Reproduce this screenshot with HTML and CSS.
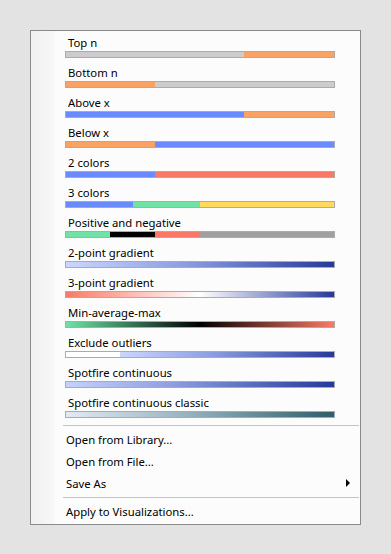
FILE: index.html
```html
<!DOCTYPE html>
<html lang="en">
<head>
    <meta charset="UTF-8">
    <title>Color Scheme Menu</title>
    <link rel="stylesheet" href="styles.css">
</head>
<body>
    <div class="menu">
        <div class="scheme">
            <div class="scheme-label">Top n</div>
            <div class="bar bar-top-n"></div>
        </div>
        <div class="scheme">
            <div class="scheme-label">Bottom n</div>
            <div class="bar bar-bottom-n"></div>
        </div>
        <div class="scheme">
            <div class="scheme-label">Above x</div>
            <div class="bar bar-above-x"></div>
        </div>
        <div class="scheme">
            <div class="scheme-label">Below x</div>
            <div class="bar bar-below-x"></div>
        </div>
        <div class="scheme">
            <div class="scheme-label">2 colors</div>
            <div class="bar bar-two"></div>
        </div>
        <div class="scheme">
            <div class="scheme-label">3 colors</div>
            <div class="bar bar-three"></div>
        </div>
        <div class="scheme">
            <div class="scheme-label">Positive and negative</div>
            <div class="bar bar-posneg"></div>
        </div>
        <div class="scheme">
            <div class="scheme-label">2-point gradient</div>
            <div class="bar bar-grad2"></div>
        </div>
        <div class="scheme">
            <div class="scheme-label">3-point gradient</div>
            <div class="bar bar-grad3"></div>
        </div>
        <div class="scheme">
            <div class="scheme-label">Min-average-max</div>
            <div class="bar bar-minmax"></div>
        </div>
        <div class="scheme">
            <div class="scheme-label">Exclude outliers</div>
            <div class="bar bar-outliers"></div>
        </div>
        <div class="scheme">
            <div class="scheme-label">Spotfire continuous</div>
            <div class="bar bar-spotfire"></div>
        </div>
        <div class="scheme">
            <div class="scheme-label">Spotfire continuous classic</div>
            <div class="bar bar-classic"></div>
        </div>

        <div class="separator"></div>
        <div class="menu-item">Open from Library...</div>
        <div class="menu-item">Open from File...</div>
        <div class="menu-item">
            <span>Save As</span>
            <span class="submenu-arrow"></span>
        </div>
        <div class="separator separator-low"></div>
        <div class="menu-item">Apply to Visualizations...</div>
    </div>
</body>
</html>
```

FILE: styles.css
```css
/* Windows style context menu */
body {
    margin: 0;
    background-color: #e3e3e3;
    font-family: 'Noto Sans', 'Open Sans', sans-serif;
    font-size: 11.3px;
    color: #000;
}

.menu {
    margin: 30px 0 0 30px;
    width: 329px;
    border: 1px solid #8a8a8a;
    padding: 2px 0;
    /* grey icon gutter on the left */
    background: linear-gradient(to right, #f0f0f0 0, #f8f8f8 23px, #fcfcfc 24px);
}

.scheme {
    height: 30px;
    box-sizing: border-box;
    padding-top: 2px;
}

.scheme-label {
    height: 16px;
    line-height: 16px;
    padding-left: 37px;
    white-space: nowrap;
}

.bar {
    margin-left: 34px;
    width: 268px;
    height: 5px;
    border: 1px solid #ababab;
}

/* colour schemes */
.bar-top-n {
    background: linear-gradient(to right, #cccccc 66.6%, #faa264 66.6%);
}

.bar-bottom-n {
    background: linear-gradient(to right, #faa264 33.3%, #cccccc 33.3%);
}

.bar-above-x {
    background: linear-gradient(to right, #6a8bff 66.6%, #faa264 66.6%);
}

.bar-below-x {
    background: linear-gradient(to right, #faa264 33.3%, #6a8bff 33.3%);
}

.bar-two {
    background: linear-gradient(to right, #6a8bff 33.3%, #fa7966 33.3%);
}

.bar-three {
    background: linear-gradient(to right, #6a8bff 25%, #6ee3a5 25%, #6ee3a5 50%, #ffda5c 50%);
}

.bar-posneg {
    background: linear-gradient(to right, #6ee3a5 16.6%, #000 16.6%, #000 33.3%, #fa7966 33.3%, #fa7966 50%, #a0a0a0 50%);
}

.bar-grad2 {
    background: linear-gradient(to right, #ccd6ff, #8a9de0 45%, #26399a);
}

.bar-grad3 {
    background: linear-gradient(to right, #fa7966, #ffffff 50%, #26399a);
}

.bar-minmax {
    background: linear-gradient(to right, #6ee3a5, #000 50%, #fa7966);
}

.bar-outliers {
    background: linear-gradient(to right, #fff 20%, #ccd6ff 20%, #8a9de0 55%, #26399a);
}

.bar-spotfire {
    background: linear-gradient(to right, #c7d1fa, #8c9ee0 40%, #26399a);
}

.bar-classic {
    background: linear-gradient(to right, #e2eaf2, #98b2bf 45%, #2e5e6c);
}

.separator {
    height: 1px;
    margin: 2px 1px 2px 32px;
    background-color: #c5c5c5;
}

.separator-low {
    margin-top: 3px;
}

.menu-item {
    display: flex;
    align-items: center;
    justify-content: space-between;
    height: 22px;
    padding: 0 10px 0 35px;
    white-space: nowrap;
}

.submenu-arrow {
    width: 0;
    height: 0;
    border-top: 4px solid transparent;
    border-bottom: 4px solid transparent;
    border-left: 4px solid #000;
}
```
